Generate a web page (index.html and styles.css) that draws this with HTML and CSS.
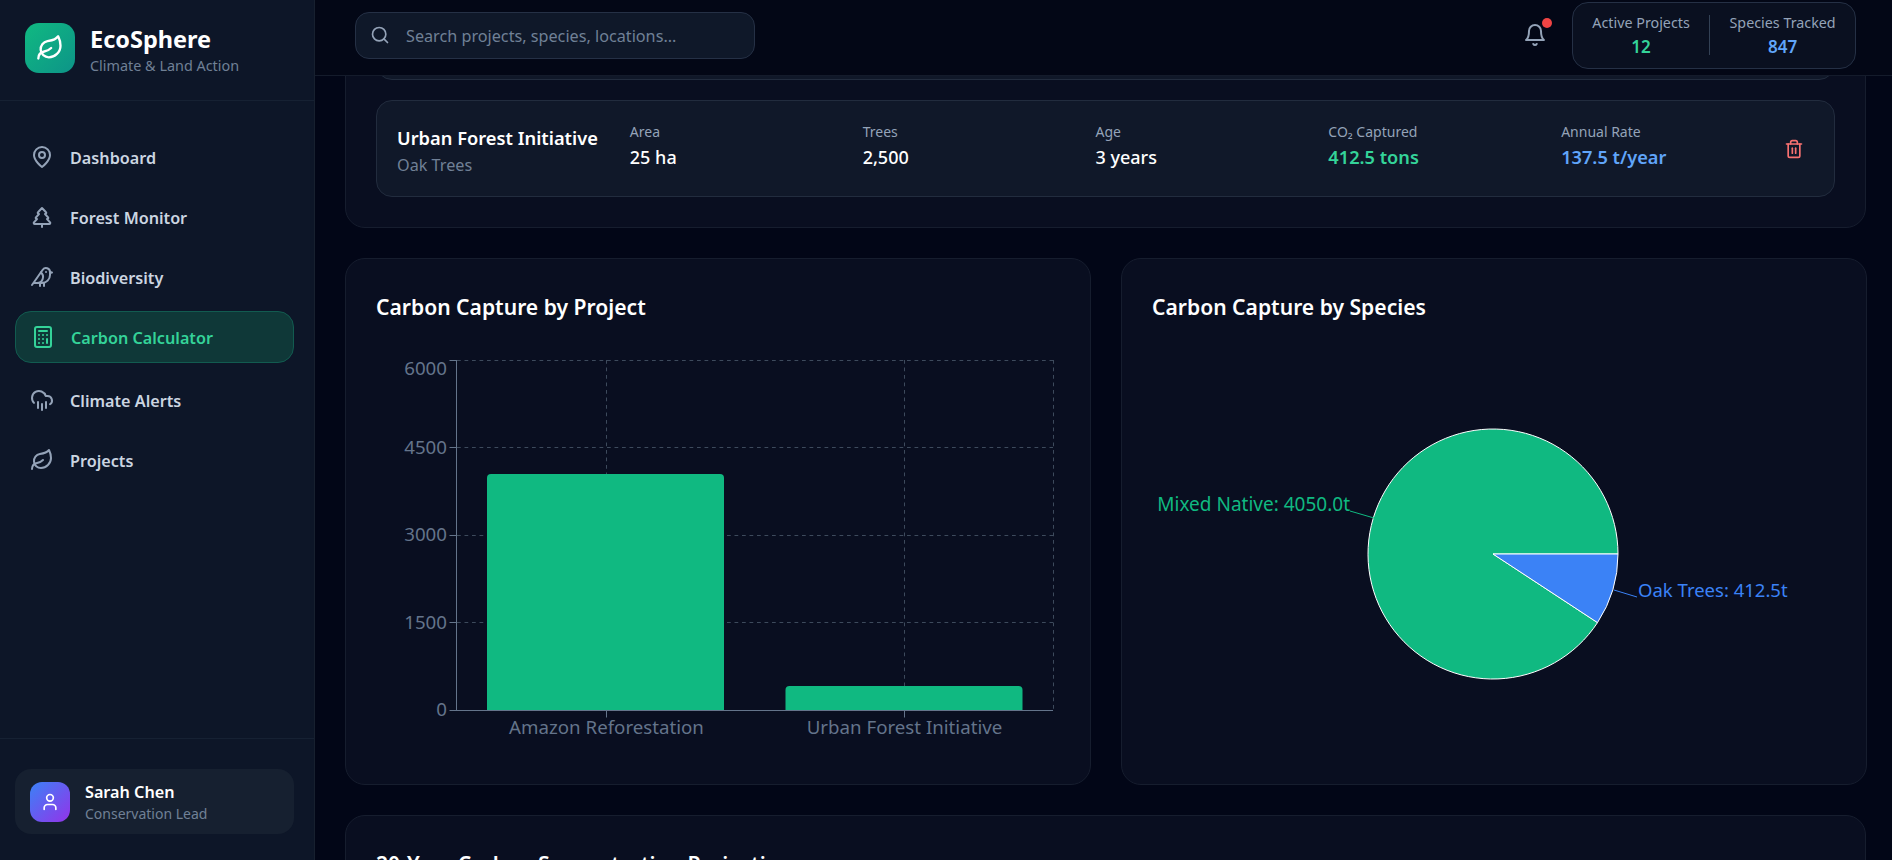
FILE: index.html
```html
<!DOCTYPE html>
<html lang="en">
<head>
  <meta charset="UTF-8" />
  <meta name="viewport" content="width=device-width, initial-scale=1" />
  <title>EcoSphere - Carbon Calculator</title>
  <link rel="stylesheet" href="styles.css">
</head>
<body>
  <svg class="sprite" aria-hidden="true">
    <symbol id="i-leaf" viewBox="0 0 24 24"><path d="M11 20A7 7 0 0 1 9.8 6.1C15.5 5 17 4.48 19 2c1 2 2 4.18 2 8 0 5.5-4.78 10-10 10Z"/><path d="M2 21c0-3 1.85-5.36 5.08-6C9.5 14.52 12 13 13 12"/></symbol>
    <symbol id="i-pin" viewBox="0 0 24 24"><path d="M20 10c0 6-8 12-8 12s-8-6-8-12a8 8 0 0 1 16 0Z"/><circle cx="12" cy="10" r="3"/></symbol>
    <symbol id="i-tree" viewBox="0 0 24 24"><path d="m17 14 3 3.3a1 1 0 0 1-.7 1.7H4.7a1 1 0 0 1-.7-1.7L7 14h-.3a1 1 0 0 1-.7-1.7L9 9h-.2A1 1 0 0 1 8 7.3L12 3l4 4.3a1 1 0 0 1-.8 1.7H15l3 3.3a1 1 0 0 1-.7 1.7H17Z"/><path d="M12 22v-3"/></symbol>
    <symbol id="i-bird" viewBox="0 0 24 24"><path d="M16 7h.01"/><path d="M3.4 18H12a8 8 0 0 0 8-8V7a4 4 0 0 0-7.28-2.3L2 20"/><path d="m20 7 2 .5-2 .5"/><path d="M10 18v3"/><path d="M14 17.75V21"/><path d="M7 18a6 6 0 0 0 3.84-10.61"/></symbol>
    <symbol id="i-calc" viewBox="0 0 24 24"><rect width="16" height="20" x="4" y="2" rx="2"/><line x1="8" x2="16" y1="6" y2="6"/><line x1="16" x2="16" y1="14" y2="18"/><path d="M16 10h.01"/><path d="M12 10h.01"/><path d="M8 10h.01"/><path d="M12 14h.01"/><path d="M8 14h.01"/><path d="M12 18h.01"/><path d="M8 18h.01"/></symbol>
    <symbol id="i-rain" viewBox="0 0 24 24"><path d="M4 14.899A7 7 0 1 1 15.71 8h1.79a4.5 4.5 0 0 1 2.5 8.242"/><path d="M16 14v6"/><path d="M8 14v6"/><path d="M12 16v6"/></symbol>
    <symbol id="i-search" viewBox="0 0 24 24"><circle cx="11" cy="11" r="8"/><path d="m21 21-4.3-4.3"/></symbol>
    <symbol id="i-bell" viewBox="0 0 24 24"><path d="M6 8a6 6 0 0 1 12 0c0 7 3 9 3 9H3s3-2 3-9"/><path d="M10.3 21a1.94 1.94 0 0 0 3.4 0"/></symbol>
    <symbol id="i-trash" viewBox="0 0 24 24"><path d="M3 6h18"/><path d="M19 6v14c0 1-1 2-2 2H7c-1 0-2-1-2-2V6"/><path d="M8 6V4c0-1 1-2 2-2h4c1 0 2 1 2 2v2"/><line x1="10" x2="10" y1="11" y2="17"/><line x1="14" x2="14" y1="11" y2="17"/></symbol>
    <symbol id="i-user" viewBox="0 0 24 24"><path d="M19 21v-2a4 4 0 0 0-4-4H9a4 4 0 0 0-4 4v2"/><circle cx="12" cy="7" r="4"/></symbol>
  </svg>

  <div class="shell">
    <aside class="sidebar">
      <div class="brand">
        <div class="brand-logo"><svg class="icon icon-logo"><use href="#i-leaf"/></svg></div>
        <div>
          <div class="brand-name">EcoSphere</div>
          <div class="brand-tag">Climate &amp; Land Action</div>
        </div>
      </div>

      <nav class="nav">
        <a class="nav-item"><svg class="icon"><use href="#i-pin"/></svg>Dashboard</a>
        <a class="nav-item"><svg class="icon"><use href="#i-tree"/></svg>Forest Monitor</a>
        <a class="nav-item"><svg class="icon"><use href="#i-bird"/></svg>Biodiversity</a>
        <a class="nav-item active"><svg class="icon"><use href="#i-calc"/></svg>Carbon Calculator</a>
        <a class="nav-item"><svg class="icon"><use href="#i-rain"/></svg>Climate Alerts</a>
        <a class="nav-item"><svg class="icon"><use href="#i-leaf"/></svg>Projects</a>
      </nav>

      <div class="sidebar-foot">
        <div class="user-card">
          <div class="avatar"><svg class="icon icon-user"><use href="#i-user"/></svg></div>
          <div class="user-text">
            <div class="user-name">Sarah Chen</div>
            <div class="user-role">Conservation Lead</div>
          </div>
        </div>
      </div>
    </aside>

    <div class="main">
      <header class="topbar">
        <div class="search">
          <svg class="icon icon-search"><use href="#i-search"/></svg>
          <span class="search-text">Search projects, species, locations...</span>
        </div>
        <div class="topbar-right">
          <div class="bell">
            <svg class="icon"><use href="#i-bell"/></svg>
            <span class="bell-dot"></span>
          </div>
          <div class="top-stats">
            <div class="top-stat">
              <div class="top-stat-label">Active Projects</div>
              <div class="top-stat-value green">12</div>
            </div>
            <div class="top-stat-sep"></div>
            <div class="top-stat">
              <div class="top-stat-label">Species Tracked</div>
              <div class="top-stat-value blue">847</div>
            </div>
          </div>
        </div>
      </header>

      <main class="content">
        <section class="panel panel-projects">
          <div class="project-row-end"></div>
          <div class="project-row">
            <div class="project-grid">
              <div class="project-title">
                <div class="project-name">Urban Forest Initiative</div>
                <div class="project-species">Oak Trees</div>
              </div>
              <div class="stat">
                <div class="stat-label">Area</div>
                <div class="stat-value">25 ha</div>
              </div>
              <div class="stat">
                <div class="stat-label">Trees</div>
                <div class="stat-value">2,500</div>
              </div>
              <div class="stat">
                <div class="stat-label">Age</div>
                <div class="stat-value">3 years</div>
              </div>
              <div class="stat">
                <div class="stat-label">CO₂ Captured</div>
                <div class="stat-value strong green">412.5 tons</div>
              </div>
              <div class="stat">
                <div class="stat-label">Annual Rate</div>
                <div class="stat-value strong blue">137.5 t/year</div>
              </div>
            </div>
            <button class="trash"><svg class="icon icon-trash"><use href="#i-trash"/></svg></button>
          </div>
        </section>

        <div class="chart-grid">
          <section class="panel">
            <h3 class="panel-title">Carbon Capture by Project</h3>
            <svg class="chart" viewBox="0 0 684 400">
              <g class="grid-lines">
                <line x1="81" x2="677" y1="6.5" y2="6.5"/>
                <line x1="81" x2="677" y1="93.5" y2="93.5"/>
                <line x1="81" x2="677" y1="181.5" y2="181.5"/>
                <line x1="81" x2="677" y1="268.5" y2="268.5"/>
                <line x1="230.5" x2="230.5" y1="6" y2="356"/>
                <line x1="528.5" x2="528.5" y1="6" y2="356"/>
                <line x1="677.5" x2="677.5" y1="6" y2="356"/>
              </g>
              <path class="bar" d="M111 356V124a4 4 0 0 1 4-4H344a4 4 0 0 1 4 4V356Z"/>
              <path class="bar" d="M409.5 356V336a4 4 0 0 1 4-4H642.5a4 4 0 0 1 4 4V356Z"/>
              <g class="axis">
                <line x1="80.5" x2="80.5" y1="6" y2="356"/>
                <line x1="80" x2="677" y1="356.5" y2="356.5"/>
                <line x1="73.5" x2="81" y1="6.5" y2="6.5"/>
                <line x1="73.5" x2="81" y1="93.5" y2="93.5"/>
                <line x1="73.5" x2="81" y1="181.5" y2="181.5"/>
                <line x1="73.5" x2="81" y1="268.5" y2="268.5"/>
                <line x1="73.5" x2="81" y1="356.5" y2="356.5"/>
                <line x1="230.5" x2="230.5" y1="356" y2="363.5"/>
                <line x1="528.5" x2="528.5" y1="356" y2="363.5"/>
              </g>
              <g class="tick-y">
                <text x="71" y="21">6000</text>
                <text x="71" y="100">4500</text>
                <text x="71" y="187">3000</text>
                <text x="71" y="275">1500</text>
                <text x="71" y="362">0</text>
              </g>
              <g class="tick-x">
                <text x="230.5" y="380">Amazon Reforestation</text>
                <text x="528.5" y="380">Urban Forest Initiative</text>
              </g>
            </svg>
          </section>

          <section class="panel">
            <h3 class="panel-title">Carbon Capture by Species</h3>
            <svg class="chart" viewBox="0 0 684 400">
              <path class="slice-green" d="M341 200L445.5 268.6A125 125 0 1 1 466 200Z"/>
              <path class="slice-blue" d="M341 200L466 200A125 125 0 0 1 445.5 268.6Z"/>
              <line class="lead-green" x1="198" y1="157" x2="222" y2="164"/>
              <line class="lead-blue" x1="462" y1="236" x2="485" y2="243"/>
              <text class="label-green" x="198" y="157">Mixed Native: 4050.0t</text>
              <text class="label-blue" x="486" y="243">Oak Trees: 412.5t</text>
            </svg>
          </section>
        </div>

        <section class="panel panel-last">
          <h3 class="panel-title">20-Year Carbon Sequestration Projection</h3>
        </section>
      </main>
    </div>
  </div>
</body>
</html>
```

FILE: styles.css
```css
* {
  box-sizing: border-box;
}
:root {
  --bg: #020617;
  --side: #0d1628;
  --line: #1e293b;
  --green: #34d399;
  --blue: #60a5fa;
  --muted: #708096;
}
html, body {
  margin: 0;
  height: 100%;
}
body {
  font-family: "Noto Sans", "Open Sans", sans-serif;
  background: var(--bg);
  color: #fff;
  overflow: hidden;
}
.sprite {
  display: none;
}
.icon {
  width: 24px;
  height: 24px;
  fill: none;
  stroke: currentColor;
  stroke-width: 2;
  stroke-linecap: round;
  stroke-linejoin: round;
  flex: none;
}
.green { color: var(--green); }
.blue { color: var(--blue); }

.shell {
  display: flex;
  height: 860px;
}

/* sidebar */
.sidebar {
  width: 315px;
  flex: none;
  display: flex;
  flex-direction: column;
  background: var(--side);
  border-right: 1px solid #17202f;
}
.brand {
  height: 101px;
  padding: 23px 25px 0;
  display: flex;
  gap: 15px;
  border-bottom: 1px solid #162133;
}
.brand-logo {
  width: 50px;
  height: 50px;
  border-radius: 14px;
  background: linear-gradient(135deg, #10b981, #0d9488);
  display: flex;
  align-items: center;
  justify-content: center;
}
.icon-logo {
  width: 28px;
  height: 28px;
}
.brand-name {
  font-size: 23.5px;
  font-weight: 700;
  line-height: 32px;
}
.brand-tag {
  font-size: 14.4px;
  line-height: 20px;
  margin-top: 1px;
  color: var(--muted);
}
.nav {
  padding: 31px 20px 0 15px;
  display: flex;
  flex-direction: column;
  gap: 10px;
}
.nav-item {
  height: 50px;
  padding: 2px 15px 0;
  display: flex;
  align-items: center;
  gap: 16px;
  font-size: 16.2px;
  font-weight: 600;
  color: #cbd5e1;
  border-radius: 16px;
}
.nav-item .icon {
  margin-top: -2px;
  color: #94a3b8;
}
.nav-item.active {
  height: 52px;
  margin: -1px 0 2px;
  color: var(--green);
  background: #0f3838;
  border: 1px solid #125b50;
}
.nav-item.active .icon {
  color: var(--green);
}
.sidebar-foot {
  margin-top: auto;
  padding: 30px 20px 26px 15px;
  border-top: 1px solid #162133;
}
.user-card {
  height: 65px;
  padding: 0 15px;
  display: flex;
  align-items: center;
  gap: 15px;
  background: #162030;
  border-radius: 16px;
}
.avatar {
  width: 40px;
  height: 40px;
  border-radius: 12px;
  background: linear-gradient(135deg, #3b82f6, #9333ea);
  display: flex;
  align-items: center;
  justify-content: center;
}
.icon-user {
  width: 20px;
  height: 20px;
}
.user-text {
  padding-top: 2px;
}
.user-name {
  font-size: 16.2px;
  font-weight: 600;
  line-height: 23px;
}
.user-role {
  font-size: 14px;
  line-height: 20px;
  color: var(--muted);
}

/* top bar */
.main {
  flex: 1;
  min-width: 0;
  display: flex;
  flex-direction: column;
}
.topbar {
  height: 76px;
  flex: none;
  padding: 0 36px 0 40px;
  display: flex;
  align-items: center;
  justify-content: space-between;
  background: #030716;
  border-bottom: 1px solid #141b2b;
  position: relative;
  z-index: 1;
}
.search {
  width: 400px;
  height: 47px;
  padding: 0 14px;
  display: flex;
  align-items: center;
  gap: 16px;
  background: #0f1829;
  border: 1px solid #253045;
  border-radius: 14px;
  margin-top: -5px;
}
.icon-search {
  width: 20px;
  height: 20px;
  color: #94a3b8;
}
.search-text {
  font-size: 16.2px;
  line-height: 24px;
  padding-top: 2px;
  color: var(--muted);
}
.topbar-right {
  display: flex;
  align-items: center;
  gap: 25px;
  margin-top: -5px;
}
.bell {
  position: relative;
  width: 24px;
  height: 24px;
  color: #94a3b8;
}
.bell-dot {
  position: absolute;
  top: -5px;
  right: -5px;
  width: 10px;
  height: 10px;
  border-radius: 50%;
  background: #ef4444;
}
.top-stats {
  width: 284px;
  height: 67px;
  display: flex;
  align-items: center;
  background: #0a1020;
  border: 1px solid #253045;
  border-radius: 16px;
}
.top-stat {
  flex: 1 1 auto;
  text-align: center;
}
.top-stat-sep {
  width: 1px;
  height: 40px;
  flex: none;
  background: #334155;
}
.top-stat-label {
  font-size: 14.3px;
  line-height: 22px;
  color: #94a3b8;
}
.top-stat-value {
  font-size: 17px;
  font-weight: 600;
  line-height: 25px;
}

/* content */
.content {
  flex: 1;
  min-height: 0;
  overflow: hidden;
  padding: 0 26px 0 30px;
}
.panel {
  background: #090e20;
  border: 1px solid #161d2e;
  border-radius: 20px;
  padding: 30px;
}
.panel-projects {
  margin-top: -60px;
}
.project-row-end {
  height: 33px;
  margin-bottom: 20px;
  background: #101829;
  border: 1px solid #222c3e;
  border-radius: 16px;
}
.project-row {
  height: 97px;
  padding: 0 20px;
  display: flex;
  align-items: center;
  background: #101829;
  border: 1px solid #222c3e;
  border-radius: 16px;
}
.project-grid {
  flex: 1;
  display: grid;
  grid-template-columns: repeat(6, 1fr);
  gap: 18px;
  align-items: center;
}
.project-title {
  margin-top: 6px;
}
.project-name {
  font-size: 18.3px;
  font-weight: 600;
  line-height: 26px;
  white-space: nowrap;
}
.project-species {
  font-size: 16.2px;
  line-height: 28px;
  color: var(--muted);
}
.stat {
  margin-bottom: 3px;
}
.stat-label {
  font-size: 14px;
  line-height: 20px;
  color: #94a3b8;
}
.stat-value {
  font-size: 18px;
  font-weight: 500;
  line-height: 30px;
}
.stat-value.strong {
  font-weight: 600;
  font-size: 18.2px;
}
.trash {
  padding: 8px;
  margin: 0 2px 0 0;
  border: 0;
  background: none;
  color: #f87171;
  display: flex;
}
.icon-trash {
  width: 20px;
  height: 20px;
}
.chart-grid {
  display: grid;
  grid-template-columns: 1fr 1fr;
  gap: 30px;
  margin: 30px 0;
}
.panel-title {
  margin: 1px 0 31px;
  font-size: 21.1px;
  font-weight: 600;
  line-height: 33px;
}
.chart {
  display: block;
  width: 684px;
  height: 400px;
}
.panel-last {
  height: 300px;
}

/* chart parts */
.grid-lines line {
  stroke: #3d4a5c;
  stroke-dasharray: 3.75 3.75;
}
.axis line {
  stroke: #64748b;
}
.bar {
  fill: #10b981;
}
.tick-y text, .tick-x text {
  font-size: 18.7px;
  fill: #64748b;
}
.tick-y text {
  text-anchor: end;
}
.tick-x text {
  text-anchor: middle;
}
.slice-green, .slice-blue {
  stroke: #fff;
  stroke-width: 1;
}
.slice-green { fill: #10b981; }
.slice-blue { fill: #3b82f6; }
.lead-green { stroke: #10b981; }
.lead-blue { stroke: #3b82f6; }
.label-green {
  font-size: 19px;
  fill: #10b981;
  text-anchor: end;
}
.label-blue {
  font-size: 18.5px;
  fill: #3b82f6;
}
```
